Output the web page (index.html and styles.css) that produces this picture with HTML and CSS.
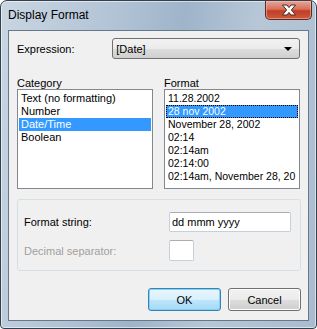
FILE: index.html
```html
<!DOCTYPE html>
<html lang="en">
<head>
    <meta charset="UTF-8">
    <title>Display Format</title>
    <link rel="stylesheet" href="styles.css">
</head>
<body>
    <div class="window">
        <div class="titlebar">
            <span class="title">Display Format</span>
            <div class="close-btn">
                <svg width="16" height="12" viewBox="0 0 16 12">
                    <path d="M1.5 1 H6 L8 3.6 L10 1 H14.5 L10.4 6 L14.5 11 H10 L8 8.4 L6 11 H1.5 L5.6 6 Z" fill="#fff" stroke="#4a2a22" stroke-width="1" stroke-linejoin="round"/>
                </svg>
            </div>
        </div>
        <div class="client">
            <div class="expr-row">
                <label class="expr-label">Expression:</label>
                <div class="combo">
                    <span>[Date]</span>
                    <span class="arrow"></span>
                </div>
            </div>

            <div class="lists">
                <div class="list-col">
                    <div class="list-label">Category</div>
                    <ul class="listbox">
                        <li>Text (no formatting)</li>
                        <li>Number</li>
                        <li class="selected">Date/Time</li>
                        <li>Boolean</li>
                    </ul>
                </div>
                <div class="list-col">
                    <div class="list-label">Format</div>
                    <ul class="listbox format-list">
                        <li>11.28.2002</li>
                        <li class="selected focused">28 nov 2002</li>
                        <li>November 28, 2002</li>
                        <li>02:14</li>
                        <li>02:14am</li>
                        <li>02:14:00</li>
                        <li>02:14am, November 28, 20</li>
                    </ul>
                </div>
            </div>

            <div class="group">
                <div class="field-row">
                    <label class="field-label">Format string:</label>
                    <div class="textbox wide">dd mmm yyyy</div>
                </div>
                <div class="field-row">
                    <label class="field-label disabled">Decimal separator:</label>
                    <div class="textbox small"></div>
                </div>
            </div>

            <div class="buttons">
                <button class="btn default">OK</button>
                <button class="btn">Cancel</button>
            </div>
        </div>
    </div>
</body>
</html>
```

FILE: styles.css
```css
body {
    margin: 0;
    padding: 0;
    font-family: "Liberation Sans", Arial, sans-serif;
    font-size: 11px;
    background-color: #ffffff;
}
.window {
    width: 317px;
    height: 329px;
    box-sizing: border-box;
    border: 1px solid #33414f;
    border-radius: 7px 7px 4px 4px;
    background: linear-gradient(100deg, #c9d6e2 0%, #b3c4d6 30%, #9fb4ca 50%, #b7c7d7 70%, #a9bccf 100%);
    padding: 0 7px 7px 7px;
    display: flex;
    flex-direction: column;
    box-shadow: inset 0 0 0 1px rgba(255,255,255,0.55);
}
.titlebar {
    height: 29px;
    display: flex;
    justify-content: space-between;
    align-items: flex-start;
}
.title {
    font-size: 12px;
    color: #000;
    padding-top: 7px;
}
.close-btn {
    width: 47px;
    height: 19px;
    margin-right: -3px;
    box-sizing: border-box;
    border: 1px solid #5b2a22;
    border-top: none;
    border-radius: 0 0 5px 5px;
    background: linear-gradient(#e6a595 0%, #d7705c 45%, #c23e26 55%, #cc5a3c 100%);
    box-shadow: inset 0 0 0 1px rgba(255,200,190,0.5);
    display: flex;
    align-items: center;
    justify-content: center;
}
.client {
    flex: 1;
    background-color: #f0f0f0;
    border: 1px solid #66788a;
    padding: 0 8px;
    display: flex;
    flex-direction: column;
}
.expr-row {
    display: flex;
    align-items: center;
    margin-top: 7px;
    height: 21px;
}
.expr-label {
    width: 96px;
    color: #000;
}
.combo {
    width: 189px;
    height: 21px;
    box-sizing: border-box;
    border: 1px solid #707070;
    border-radius: 3px;
    background: linear-gradient(#f2f2f2 0%, #ebebeb 50%, #dddddd 51%, #cfcfcf 100%);
    display: flex;
    align-items: center;
    justify-content: space-between;
    padding: 0 7px 0 3px;
}
.arrow {
    width: 0;
    height: 0;
    border-left: 4px solid transparent;
    border-right: 4px solid transparent;
    border-top: 4px solid #000;
}
.lists {
    display: flex;
    gap: 11px;
    margin-top: 18px;
}
.list-col {
    width: 137px;
}
.list-label {
    height: 12px;
    line-height: 12px;
    color: #000;
}
.listbox {
    list-style: none;
    margin: 0;
    padding: 2px 1px;
    height: 100px;
    box-sizing: border-box;
    border: 1px solid #828790;
    background: #fff;
    overflow: hidden;
}
.listbox li {
    height: 13px;
    line-height: 13px;
    padding-left: 2px;
    white-space: nowrap;
    color: #000;
}
.format-list li {
    font-size: 10.5px;
}
.listbox li.selected {
    background-color: #3399ff;
    color: #fff;
}
.listbox li.focused {
    outline: 1px dotted #000;
    outline-offset: -1px;
}
.group {
    margin-top: 10px;
    height: 72px;
    width: 284px;
    box-sizing: border-box;
    border: 1px solid #d5dfe5;
    border-radius: 3px;
    padding: 12px 0 0 6px;
    display: flex;
    flex-direction: column;
    gap: 8px;
}
.field-row {
    display: flex;
    align-items: center;
}
.field-label {
    width: 145px;
    color: #000;
}
.field-label.disabled {
    color: #a0a0a0;
}
.textbox {
    box-sizing: border-box;
    border: 1px solid #c5d0da;
    border-top-color: #abadb3;
    background: #fff;
    border-radius: 2px;
    padding: 1px 2px;
    color: #000;
}
.textbox.wide {
    width: 122px;
    height: 20px;
    line-height: 16px;
}
.textbox.small {
    width: 25px;
    height: 21px;
}
.buttons {
    display: flex;
    justify-content: flex-end;
    gap: 7px;
    margin-top: 17px;
    margin-right: -1px;
}
.btn {
    width: 73px;
    height: 23px;
    font-family: "Liberation Sans", Arial, sans-serif;
    font-size: 11px;
    color: #000;
    border: 1px solid #707070;
    border-radius: 3px;
    background: linear-gradient(#f2f2f2 0%, #ebebeb 50%, #dddddd 51%, #cfcfcf 100%);
    box-shadow: inset 0 0 0 1px #fcfcfc;
    padding: 0;
}
.btn.default {
    border-color: #3c7fb1;
    background: linear-gradient(#eaf6fd 0%, #d9f0fc 50%, #bee6fd 51%, #a7d9f5 100%);
    box-shadow: inset 0 0 0 1px #7fd2f8;
}
```
